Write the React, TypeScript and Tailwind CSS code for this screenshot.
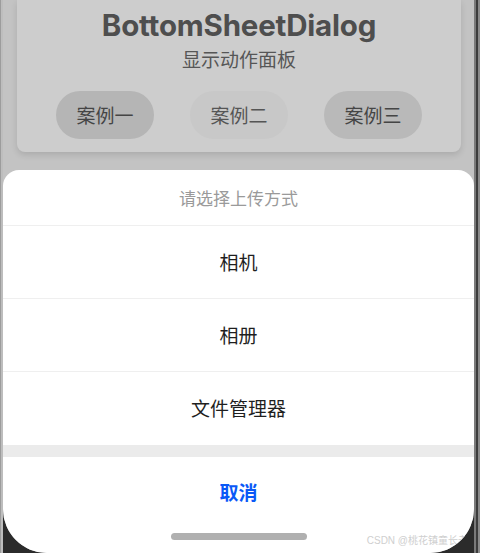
export default function App() {
    const options = ["相机", "相册", "文件管理器"];

    return (
        <div className="w-[480px] h-[553px] bg-[#2b2b2b] flex overflow-hidden" style={{ fontFamily: '"Noto Sans CJK SC", Inter, sans-serif' }}>
            {/* phone frame edges */}
            <div className="w-[3px] h-full flex">
                <div className="w-[1px] h-full bg-[#9c9c9c]" />
                <div className="w-[2px] h-full bg-[#bdbdbd]" />
            </div>

            <div className="relative w-[471px] h-full bg-[#c3c3c3] rounded-bl-[44px] rounded-br-[44px] overflow-hidden flex flex-col">
                <div className="mx-[14px] mr-[13px] h-[152px] bg-[#cdcdcd] rounded-b-lg shadow-[0_3px_6px_rgba(0,0,0,0.12)] flex flex-col items-center">
                    <h1 className="mt-[6px] text-[29.5px] leading-[38px] font-bold text-[#4e4e4e] tracking-[-0.2px]" style={{ fontFamily: 'Inter, "Noto Sans CJK SC", sans-serif' }}>
                        BottomSheetDialog
                    </h1>
                    <p className="mt-[3px] text-[19px] leading-[24px] text-[#565656]">显示动作面板</p>
                    <div className="mt-[20px] flex justify-center gap-[36px]">
                        <div className="w-[98px] h-[48px] rounded-full bg-[#b5b5b5] flex items-center justify-center text-[19px] text-[#454545]">案例一</div>
                        <div className="w-[98px] h-[48px] rounded-full bg-[#c8c8c8] flex items-center justify-center text-[19px] text-[#555555]">案例二</div>
                        <div className="w-[98px] h-[48px] rounded-full bg-[#b9b9b9] flex items-center justify-center text-[19px] text-[#454545]">案例三</div>
                    </div>
                </div>

                <div className="mt-[18px] flex-1 bg-white rounded-t-[16px] flex flex-col">
                    <div className="h-[56px] flex items-center justify-center text-[17px] text-[#9a9a9a] border-b border-[#efefef]">
                        请选择上传方式
                    </div>
                    {options.map((o, i) => (
                        <div key={o} className={`h-[73px] flex items-center justify-center text-[19px] text-[#1f1f1f] ${i < 2 ? "border-b border-[#efefef]" : ""}`}>
                            {o}
                        </div>
                    ))}
                    <div className="h-[12px] bg-[#ebebeb]" />
                    <div className="h-[70px] flex items-center justify-center text-[19px] font-bold text-[#0a59f7]">取消</div>
                    <div className="mt-[6px] mx-auto w-[136px] h-[7px] rounded-full bg-[#b0b0b0]" />
                </div>

                <span className="absolute right-[6px] bottom-[5px] text-[10px] text-[#cfcfcf]" style={{ fontFamily: '"Liberation Sans", "Noto Sans CJK SC", sans-serif' }}>
                    CSDN @桃花镇童长老
                </span>
            </div>

            <div className="w-[6px] h-full flex">
                <div className="w-[2px] h-full bg-[#7a7a7a]" />
                <div className="w-[2px] h-full bg-[#3c3c3c]" />
                <div className="w-[2px] h-full bg-[#8a8a8a]" />
            </div>
        </div>
    );
}
